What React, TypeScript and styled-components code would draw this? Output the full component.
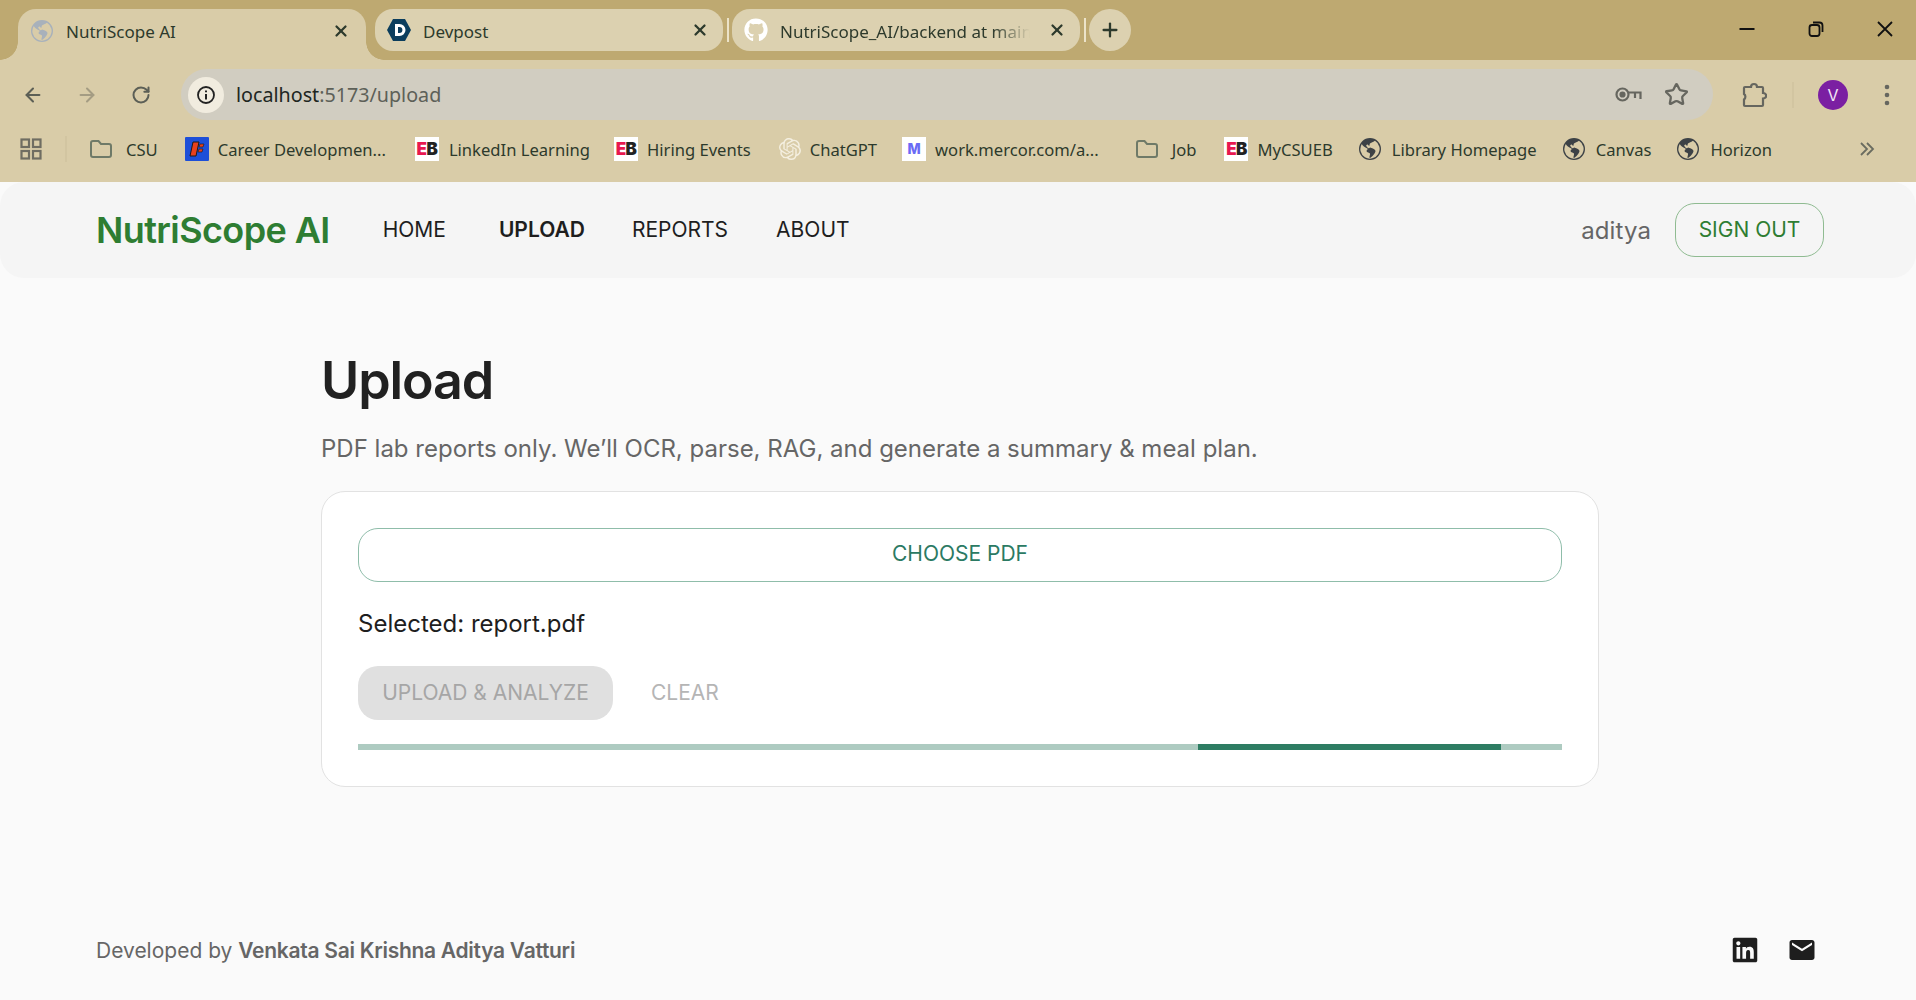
import * as React from 'react';
import styled, { createGlobalStyle } from 'styled-components';
import { ArrowLeft, ArrowRight, Plus, RotateCw, Star, X } from 'lucide-react';
import { BsGlobeAmericas } from 'react-icons/bs';
import { FaGithub, FaLinkedin } from 'react-icons/fa';
import { MdEmail } from 'react-icons/md';
import { SiOpenai } from 'react-icons/si';

const CHROME_FONT = `'Noto Sans', 'Open Sans', sans-serif`;
const PAGE_FONT = `Inter, 'Liberation Sans', sans-serif`;
const STRIP = '#bea971';
const TOOLBAR = '#d9cca8';
const INK = '#2d3a2c';

const GlobalStyle = createGlobalStyle`
  html, body {
    margin: 0;
    padding: 0;
    background: #fafafa;
    overflow: hidden;
  }
`;

const Shell = styled.div`
  display: flex;
  flex-direction: column;
  height: 1000px;
  width: 1916px;
`;

/* Browser tab strip */
const TabStrip = styled.div`
  display: flex;
  align-items: flex-start;
  height: 60px;
  padding: 9px 0 0 18px;
  box-sizing: border-box;
  background: ${STRIP};
`;

const ActiveTab = styled.div`
  position: relative;
  z-index: 1;
  display: flex;
  align-items: center;
  box-sizing: border-box;
  width: 348px;
  height: 51px;
  padding: 0 16px 8px 12px;
  background: ${TOOLBAR};
  border-radius: 18px 18px 0 0;

  &::before,
  &::after {
    content: '';
    position: absolute;
    bottom: 0;
    width: 18px;
    height: 18px;
  }
  &::before {
    left: -18px;
    background: radial-gradient(circle at 0 0, transparent 17.5px, ${TOOLBAR} 18px);
  }
  &::after {
    right: -18px;
    background: radial-gradient(circle at 100% 0, transparent 17.5px, ${TOOLBAR} 18px);
  }
`;

const Tab = styled.div<{ $width: number; $left: number }>`
  position: relative;
  z-index: 2;
  display: flex;
  align-items: center;
  box-sizing: border-box;
  width: ${p => p.$width}px;
  height: 42px;
  margin-left: ${p => p.$left}px;
  padding: 0 14px 0 12px;
  background: #dcd1b0;
  border-radius: 18px;
`;

const TabIcon = styled.span<{ $color: string }>`
  display: flex;
  flex: none;
  width: 24px;
  justify-content: center;
  color: ${p => p.$color};
  font-size: 22px;
`;

const TabTitle = styled.span`
  flex: 1;
  margin-left: 12px;
  padding-top: 2px;
  overflow: hidden;
  white-space: nowrap;
  font: 400 17px ${CHROME_FONT};
  color: ${INK};
`;

const FadedTitle = styled(TabTitle)`
  -webkit-mask-image: linear-gradient(90deg, #000 85%, transparent 100%);
  mask-image: linear-gradient(90deg, #000 85%, transparent 100%);
  margin-right: 18px;
`;

const TabClose = styled.span`
  display: flex;
  flex: none;
  color: ${INK};
`;

const TabSeparator = styled.span`
  flex: none;
  align-self: flex-start;
  width: 2px;
  height: 24px;
  margin: 9px 0 0 4px;
  background: #ece3c9;
`;

const NewTab = styled.span`
  display: flex;
  flex: none;
  align-items: center;
  justify-content: center;
  width: 42px;
  height: 42px;
  margin-left: 3px;
  border-radius: 50%;
  background: #dcd1b0;
  color: ${INK};
`;

const WindowControls = styled.div`
  display: flex;
  align-items: center;
  gap: 53px;
  height: 40px;
  margin: 0 23px 0 auto;
`;

/* Address bar row */
const Toolbar = styled.div`
  display: flex;
  align-items: center;
  height: 60px;
  padding: 9px 0 0 22px;
  box-sizing: border-box;
  background: ${TOOLBAR};
`;

const NavArrows = styled.div<{ $faded?: boolean }>`
  display: flex;
  flex: none;
  width: 22px;
  margin-right: 32px;
  justify-content: center;
  color: ${p => (p.$faded ? '#a49c83' : '#5c5f56')};
`;

const AddressBar = styled.div`
  display: flex;
  flex: none;
  align-items: center;
  box-sizing: border-box;
  width: 1532px;
  height: 51px;
  margin-left: -3px;
  padding: 0 24px 0 7px;
  border-radius: 26px;
  background: #d1cdc1;
`;

const SiteInfo = styled.span`
  display: flex;
  flex: none;
  align-items: center;
  justify-content: center;
  width: 36px;
  height: 36px;
  border-radius: 50%;
  background: #f1ecdf;
  color: #222;
`;

const Url = styled.span`
  flex: 1;
  margin-left: 12px;
  font: 400 19.7px ${CHROME_FONT};
  color: #5d6058;
`;

const UrlHost = styled.span`
  color: #20261f;
`;

const BarAction = styled.span`
  display: flex;
  flex: none;
  margin-left: 22px;
  color: #66665f;
`;

const ToolbarRight = styled.div`
  display: flex;
  flex: 1;
  align-items: center;
  padding-left: 29px;
  color: #66665f;
`;

const ToolbarDivider = styled.span`
  width: 2px;
  height: 26px;
  margin: 0 24px 0 25px;
  background: #d2c5a1;
`;

const Avatar = styled.span`
  display: flex;
  align-items: center;
  justify-content: center;
  width: 30px;
  height: 30px;
  border-radius: 50%;
  background: #7b1fa2;
  color: #f3e7f7;
  font: 400 16px ${PAGE_FONT};
`;

const MenuDots = styled.span`
  display: flex;
  margin-left: 36px;
`;

/* Bookmarks row */
const BookmarkBar = styled.div`
  display: flex;
  align-items: center;
  height: 62px;
  padding: 0 0 4px 20px;
  box-sizing: border-box;
  background: ${TOOLBAR};
`;

const AppsDivider = styled.span`
  width: 2px;
  height: 26px;
  margin: 0 22px 0 23px;
  background: #d2c5a1;
`;

const Bookmark = styled.div<{ $gap: number; $left: number }>`
  display: flex;
  flex: none;
  align-items: center;
  gap: ${p => p.$gap}px;
  margin-left: ${p => p.$left}px;
  font: 400 16.6px ${CHROME_FONT};
  color: ${INK};
  white-space: nowrap;
`;

const Favicon = styled.span<{ $bg?: string }>`
  display: flex;
  flex: none;
  align-items: center;
  justify-content: center;
  width: 24px;
  height: 24px;
  background: ${p => p.$bg ?? 'transparent'};
  font-size: 22px;
  color: #3d4246;
`;

const EbMark = styled.span`
  font: 900 17px/1 ${PAGE_FONT};
  letter-spacing: -0.6px;
  color: #222;
`;

const EbRed = styled.span`
  color: #e8174f;
`;

const MercorMark = styled.span`
  font: 800 14px/1 ${PAGE_FONT};
  color: #6a6bf5;
`;

const Overflow = styled.span`
  display: flex;
  margin-left: auto;
  margin-right: 41px;
  color: #6a6c60;
`;

/* Page */
const TopNav = styled.header`
  display: flex;
  flex: none;
  align-items: center;
  height: 96px;
  padding: 0 92px 0 96px;
  background: #f5f5f5;
  border-radius: 24px;
`;

const Logo = styled.div`
  font: 600 36px ${PAGE_FONT};
  letter-spacing: -0.6px;
  color: #2e7d32;
  margin-right: 53px;
`;

const NavLink = styled.a<{ $active?: boolean; $gap: number }>`
  margin-right: ${p => p.$gap}px;
  padding-bottom: 2px;
  font: ${p => (p.$active ? 600 : 400)} 21px ${PAGE_FONT};
  color: #1e1e1e;
`;

const UserName = styled.span`
  margin-left: auto;
  font: 400 24px ${PAGE_FONT};
  letter-spacing: 0.1px;
  color: #666;
`;

const SignOut = styled.button`
  box-sizing: border-box;
  width: 149px;
  height: 54px;
  margin-left: 24px;
  padding: 0 0 2px;
  border: 1px solid #8fbb91;
  border-radius: 20px;
  background: transparent;
  font: 400 21px ${PAGE_FONT};
  color: #2e7d32;
`;

const Main = styled.main`
  flex: 1;
  padding: 72px 317px 0 321px;
`;

const Heading = styled.h1`
  margin: 0;
  font: 600 52px/62px ${PAGE_FONT};
  letter-spacing: -1.1px;
  color: #212121;
`;

const Subtitle = styled.p`
  margin: 19px 0 24px;
  font: 400 24px/36px ${PAGE_FONT};
  color: #666;
`;

const Card = styled.section`
  box-sizing: border-box;
  display: flex;
  flex-direction: column;
  gap: 24px;
  padding: 36px;
  border: 1px solid #e2e2e2;
  border-radius: 24px;
  background: #fff;
`;

const ChooseButton = styled.button`
  height: 54px;
  padding: 0 0 3px;
  border: 1px solid #8fbdaa;
  border-radius: 20px;
  background: transparent;
  font: 400 21px ${PAGE_FONT};
  color: #2b7a63;
`;

const Selected = styled.div`
  font: 400 24px/36px ${PAGE_FONT};
  color: #1e1e1e;
`;

const Actions = styled.div`
  display: flex;
  align-items: center;
`;

const AnalyzeButton = styled.button`
  width: 255px;
  height: 54px;
  padding: 0 0 2px;
  border: 0;
  border-radius: 20px;
  background: #e0e0e0;
  font: 400 21px ${PAGE_FONT};
  color: #a6a6a6;
`;

const ClearButton = styled.button`
  margin-left: 38px;
  padding: 0 0 2px;
  border: 0;
  background: transparent;
  font: 400 21px ${PAGE_FONT};
  color: #b5b5b5;
`;

const Progress = styled.div`
  position: relative;
  height: 6px;
  background: #aecbc1;
`;

const ProgressFill = styled.div`
  position: absolute;
  top: 0;
  bottom: 0;
  background: #2e7d63;
`;

const Footer = styled.footer`
  display: flex;
  flex: none;
  align-items: center;
  justify-content: space-between;
  height: 50px;
  padding: 0 97px 25px 96px;
  font: 400 21px ${PAGE_FONT};
  color: #666;
`;

const Author = styled.strong`
  font-weight: 600;
  letter-spacing: -0.28px;
`;

const FooterIcons = styled.div`
  display: flex;
  align-items: center;
  gap: 28px;
  margin-right: 2px;
  color: #1e1e1e;
  font-size: 28px;
`;

function GlobeFavicon() {
  return (
    <Favicon>
      <BsGlobeAmericas />
    </Favicon>
  );
}

function FolderIcon() {
  return (
    <svg width="24" height="20" viewBox="0 0 24 20" fill="none" stroke="#6f7a68" strokeWidth="2">
      <path d="M2 4a2 2 0 0 1 2-2h5.5l2.5 3h8a2 2 0 0 1 2 2v9a2 2 0 0 1-2 2H4a2 2 0 0 1-2-2z" />
    </svg>
  );
}

function EbFavicon() {
  return (
    <Favicon $bg="#fff">
      <EbMark>
        <EbRed>E</EbRed>B
      </EbMark>
    </Favicon>
  );
}

const bookmarks: { label: string; icon: React.ReactNode; gap: number; left: number }[] = [
  { label: 'CSU', icon: <FolderIcon />, gap: 13, left: 0 },
  {
    label: 'Career Developmen...',
    gap: 9,
    left: 27,
    icon: (
      <svg width="24" height="24" viewBox="0 0 24 24">
        <rect width="24" height="24" rx="1" fill="#1d4fd8" />
        <path d="M8 5h6l-3 14H5z" fill="#e8401c" stroke="#1a1a1a" />
        <path d="M15 7h4l-1 3h-4zM14 12h4l-1 3h-4z" fill="#e8401c" stroke="#1a1a1a" strokeWidth="0.6" />
      </svg>
    ),
  },
  { label: 'LinkedIn Learning', icon: <EbFavicon />, gap: 10, left: 29 },
  { label: 'Hiring Events', icon: <EbFavicon />, gap: 9, left: 24 },
  {
    label: 'ChatGPT',
    gap: 8,
    left: 27,
    icon: (
      <Favicon>
        <SiOpenai color="#f4efe0" />
      </Favicon>
    ),
  },
  {
    label: 'work.mercor.com/a...',
    gap: 9,
    left: 25,
    icon: (
      <Favicon $bg="#fff">
        <MercorMark>M</MercorMark>
      </Favicon>
    ),
  },
  { label: 'Job', icon: <FolderIcon />, gap: 13, left: 36 },
  { label: 'MyCSUEB', icon: <EbFavicon />, gap: 9, left: 28 },
  { label: 'Library Homepage', icon: <GlobeFavicon />, gap: 10, left: 25 },
  { label: 'Canvas', icon: <GlobeFavicon />, gap: 10, left: 25 },
  { label: 'Horizon', icon: <GlobeFavicon />, gap: 10, left: 25 },
];

export default function App() {
  return (
    <Shell>
      <GlobalStyle />
      <TabStrip>
        <ActiveTab>
          <TabIcon $color="#a8b1bb">
            <BsGlobeAmericas />
          </TabIcon>
          <TabTitle>NutriScope AI</TabTitle>
          <TabClose>
            <X size={18} strokeWidth={3} />
          </TabClose>
        </ActiveTab>
        <Tab $width={348} $left={9}>
          <TabIcon $color="#0b3d5c">
            <svg width="24" height="24" viewBox="0 0 24 24">
              <path d="M6 1h12l6 11-6 11H6L0 12z" fill="currentColor" />
              <path
                d="M8 6h4.5a6 6 0 0 1 0 12H8zm3 3v6h1.4a3 3 0 0 0 0-6z"
                fill="#fff"
                fillRule="evenodd"
              />
            </svg>
          </TabIcon>
          <TabTitle>Devpost</TabTitle>
          <TabClose>
            <X size={18} strokeWidth={3} />
          </TabClose>
        </Tab>
        <TabSeparator />
        <Tab $width={348} $left={3}>
          <TabIcon $color="#fff">
            <FaGithub size={24} />
          </TabIcon>
          <FadedTitle>NutriScope_AI/backend at main</FadedTitle>
          <TabClose>
            <X size={18} strokeWidth={3} />
          </TabClose>
        </Tab>
        <TabSeparator />
        <NewTab>
          <Plus size={22} strokeWidth={2.5} />
        </NewTab>
        <WindowControls>
          <svg width="16" height="16" viewBox="0 0 16 16">
            <rect x="0.5" y="7" width="15" height="2" fill="#111" />
          </svg>
          <svg width="16" height="16" viewBox="0 0 16 16" fill="none" stroke="#111" strokeWidth="1.8">
            <rect x="1.5" y="4" width="10" height="11" rx="2.5" />
            <path d="M5 1.5h6.5a3 3 0 0 1 3 3V11" />
          </svg>
          <svg width="16" height="16" viewBox="0 0 16 16" fill="none" stroke="#111" strokeWidth="1.8">
            <path d="M1 1l14 14M15 1L1 15" />
          </svg>
        </WindowControls>
      </TabStrip>

      <Toolbar>
        <NavArrows>
          <ArrowLeft size={22} strokeWidth={2.2} />
        </NavArrows>
        <NavArrows $faded>
          <ArrowRight size={22} strokeWidth={2.2} />
        </NavArrows>
        <NavArrows>
          <RotateCw size={20} strokeWidth={2.4} />
        </NavArrows>
        <AddressBar>
          <SiteInfo>
            <svg width="20" height="20" viewBox="0 0 20 20" fill="none" stroke="currentColor" strokeWidth="1.8">
              <circle cx="10" cy="10" r="8" />
              <path d="M10 9v5.5M10 5.5v1.8" strokeWidth="2" />
            </svg>
          </SiteInfo>
          <Url>
            <UrlHost>localhost</UrlHost>:5173/upload
          </Url>
          <BarAction>
            <svg width="27" height="17" viewBox="0 0 27 17" fill="none" stroke="currentColor" strokeWidth="2.2">
              <circle cx="7.5" cy="8.5" r="6" />
              <circle cx="7.5" cy="8.5" r="2" fill="currentColor" />
              <path d="M13.5 6.5h12V13M20 6.5V12" />
            </svg>
          </BarAction>
          <BarAction>
            <Star size={25} strokeWidth={2.2} />
          </BarAction>
        </AddressBar>
        <ToolbarRight>
          <svg width="25" height="26" viewBox="0 0 25 26" fill="none" stroke="currentColor" strokeWidth="2.2">
            <path d="M3 5h6a3 3 0 0 1 6 0h5a1 1 0 0 1 1 1v5a3 2.6 0 0 1 0 5.5V23a1 1 0 0 1-1 1H3a1 1 0 0 1-1-1v-5.5a3.4 3.4 0 0 0 0-5.5V6a1 1 0 0 1 1-1z" />
          </svg>
          <ToolbarDivider />
          <Avatar>V</Avatar>
          <MenuDots>
            <svg width="6" height="22" viewBox="0 0 6 22" fill="currentColor">
              <circle cx="3" cy="3" r="2.3" />
              <circle cx="3" cy="11" r="2.3" />
              <circle cx="3" cy="19" r="2.3" />
            </svg>
          </MenuDots>
        </ToolbarRight>
      </Toolbar>

      <BookmarkBar>
        <svg width="22" height="22" viewBox="0 0 22 22" fill="none" stroke="#6f6d62" strokeWidth="2.2">
          <rect x="1.5" y="1.5" width="7.5" height="7.5" />
          <rect x="13" y="1.5" width="7.5" height="7.5" />
          <rect x="1.5" y="13" width="7.5" height="7.5" />
          <rect x="13" y="13" width="7.5" height="7.5" />
        </svg>
        <AppsDivider />
        {bookmarks.map(b => (
          <Bookmark key={b.label} $gap={b.gap} $left={b.left}>
            {b.icon}
            {b.label}
          </Bookmark>
        ))}
        <Overflow>
          <svg width="16" height="16" viewBox="0 0 16 16" fill="none" stroke="currentColor" strokeWidth="1.8">
            <path d="M2 2l6 6-6 6M8 2l6 6-6 6" />
          </svg>
        </Overflow>
      </BookmarkBar>

      <TopNav>
        <Logo>NutriScope AI</Logo>
        <NavLink $gap={53}>HOME</NavLink>
        <NavLink $gap={47} $active>
          UPLOAD
        </NavLink>
        <NavLink $gap={48}>REPORTS</NavLink>
        <NavLink $gap={0}>ABOUT</NavLink>
        <UserName>aditya</UserName>
        <SignOut>SIGN OUT</SignOut>
      </TopNav>

      <Main>
        <Heading>Upload</Heading>
        <Subtitle>PDF lab reports only. We’ll OCR, parse, RAG, and generate a summary &amp; meal plan.</Subtitle>
        <Card>
          <ChooseButton>CHOOSE PDF</ChooseButton>
          <Selected>Selected: report.pdf</Selected>
          <Actions>
            <AnalyzeButton>UPLOAD &amp; ANALYZE</AnalyzeButton>
            <ClearButton>CLEAR</ClearButton>
          </Actions>
          <Progress>
            <ProgressFill style={{ left: '69.77%', width: '25.17%' }} />
          </Progress>
        </Card>
      </Main>

      <Footer>
        <span>
          Developed by <Author>Venkata Sai Krishna Aditya Vatturi</Author>
        </span>
        <FooterIcons>
          <FaLinkedin />
          <MdEmail size={30} />
        </FooterIcons>
      </Footer>
    </Shell>
  );
}
